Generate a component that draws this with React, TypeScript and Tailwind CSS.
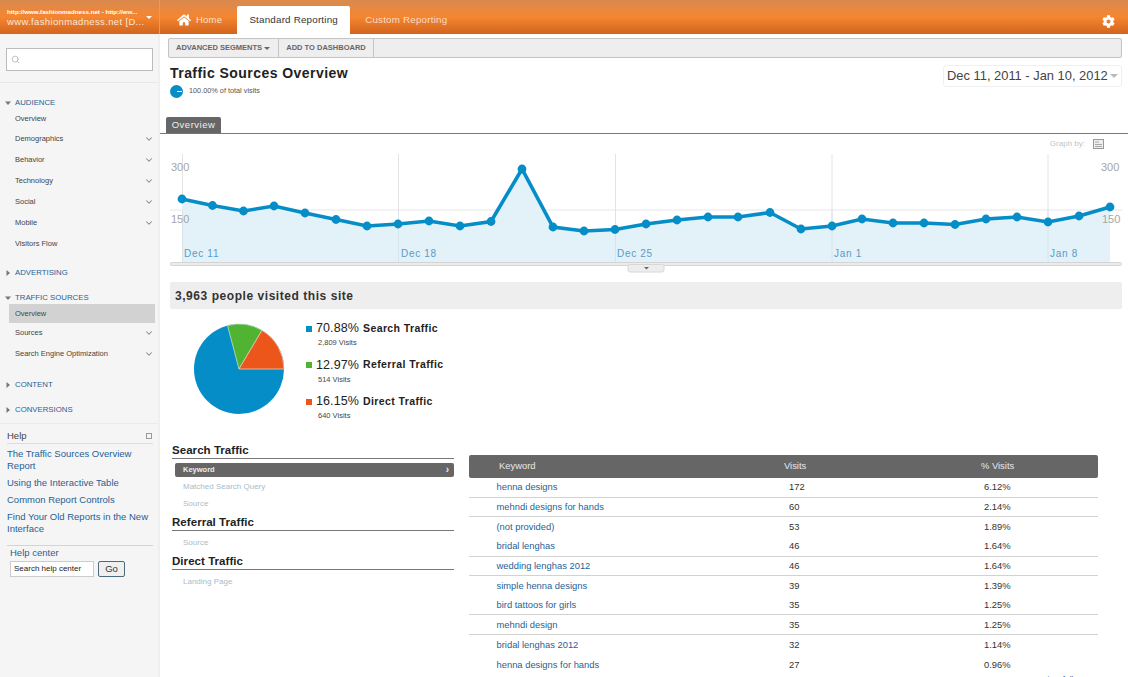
import { ChevronDown, Search } from 'lucide-react';
import { FaCog, FaHome } from 'react-icons/fa';

const audience = ['Overview', 'Demographics', 'Behavior', 'Technology', 'Social', 'Mobile', 'Visitors Flow'];

const rows = [
  { kw: 'henna designs', visits: 172, pct: '6.12%', line: true },
  { kw: 'mehndi designs for hands', visits: 60, pct: '2.14%', line: true },
  { kw: '(not provided)', visits: 53, pct: '1.89%', line: false },
  { kw: 'bridal lenghas', visits: 46, pct: '1.64%', line: true },
  { kw: 'wedding lenghas 2012', visits: 46, pct: '1.64%', line: true },
  { kw: 'simple henna designs', visits: 39, pct: '1.39%', line: false },
  { kw: 'bird tattoos for girls', visits: 35, pct: '1.25%', line: true },
  { kw: 'mehndi design', visits: 35, pct: '1.25%', line: true },
  { kw: 'bridal lenghas 2012', visits: 32, pct: '1.14%', line: false },
  { kw: 'henna designs for hands', visits: 27, pct: '0.96%', line: false },
];

// chart points in chart-local coords (chart starts at x=170, y=153)
const pts = [
  [12, 46], [42.5, 52.5], [73.5, 58], [104, 53], [135, 60], [166, 66.5], [197, 73], [228, 71], [259, 68], [290, 73],
  [321, 68.5], [352, 16], [383, 74], [414, 78], [445, 76.5], [476, 71], [507, 67], [538, 64], [568, 64], [600, 59.5],
  [631, 76], [662, 73], [692, 66], [723, 70], [754, 70], [785, 71.5], [816, 66], [847, 64], [878, 69], [909, 63], [940, 54],
];

function Caret({ open }: { open: boolean }) {
  return (
    <svg width="6" height="6" viewBox="0 0 6 6" className="shrink-0">
      {open ? <path d="M0 1.5h6L3 5z" fill="#777" /> : <path d="M1.5 0v6L5 3z" fill="#777" />}
    </svg>
  );
}

function SectionHead({ label, open, className }: { label: string; open: boolean; className: string }) {
  return (
    <div className={`flex items-center gap-[4px] pl-[5px] text-[7.8px] text-[#1f5f96] h-[12px] ${className}`}>
      <Caret open={open} />
      <span>{label}</span>
    </div>
  );
}

function NavRow({ label, more, active, height }: { label: string; more?: boolean; active?: boolean; height: string }) {
  return (
    <div className={`flex items-center justify-between ml-[9px] mr-[3px] pl-[6px] pr-[1px] text-[7.5px] text-[#444] ${height} ${active ? 'bg-[#d2d2d2]' : ''}`}>
      <span>{label}</span>
      {more && <ChevronDown size={10} strokeWidth={2.5} className="text-[#888]" />}
    </div>
  );
}

function TrafficChart() {
  const line = pts.map((p) => p.join(',')).join(' ');
  const area = `12,109 ${line} 940,109`;
  return (
    <svg width="952" height="122" viewBox="0 0 952 122" className="block">
      <path d="M0 57H952" stroke="#e6e6e6" />
      {[12.5, 228.5, 445.5, 662, 878].map((x) => (
        <path key={x} d={`M${x} 1V109`} stroke="#e4e4e4" />
      ))}
      <polygon points={area} fill="#e3f1f9" />
      {[12.5, 228.5, 445.5, 662, 878].map((x) => (
        <path key={x} d={`M${x} 57V109`} stroke="#d8e4ea" />
      ))}
      <polyline points={line} fill="none" stroke="#058dc7" strokeWidth="3.6" />
      {pts.map(([x, y]) => (
        <circle key={x} cx={x} cy={y} r="4.4" fill="#058dc7" />
      ))}
      <g fill="#a6a6a6" fontSize="11" fontFamily="Liberation Sans, sans-serif">
        <text x="1" y="18">300</text>
        <text x="1" y="70">150</text>
        <text x="931" y="18">300</text>
        <text x="932" y="70">150</text>
      </g>
      <g fill="#5a9cc5" fontSize="10" letterSpacing="0.7" fontFamily="Liberation Sans, sans-serif">
        <text x="14" y="104">Dec 11</text>
        <text x="231" y="104">Dec 18</text>
        <text x="447" y="104">Dec 25</text>
        <text x="664" y="104">Jan 1</text>
        <text x="880" y="104">Jan 8</text>
      </g>
      <rect x="0.5" y="109.5" width="951" height="3" rx="1" fill="#ececec" stroke="#d4d4d4" />
      <path d="M459.5 111.5h33a1.5 1.5 0 0 1 1.5 1.5v4a2 2 0 0 1-2 2h-32a2 2 0 0 1-2-2v-4a1.5 1.5 0 0 1 1.5-1.5z" fill="#ededed" stroke="#d8d8d8" />
      <path d="M474 114h5l-2.5 2.500z" fill="#666" />
    </svg>
  );
}

function PieChart() {
  return (
    <svg width="92" height="92" viewBox="0 0 92 92" className="block">
      <circle cx="46" cy="46" r="45" fill="#058dc7" />
      <path d="M46 46L34.500 2.500A45 45 0 0 1 69 7.400Z" fill="#50b432" stroke="#c9dcc0" strokeWidth="0.8" />
      <path d="M46 46L69 7.400A45 45 0 0 1 91 46Z" fill="#ed561b" stroke="#e8c9b5" strokeWidth="0.8" />
    </svg>
  );
}

function Legend({ color, pct, label, visits }: { color: string; pct: string; label: string; visits: string }) {
  return (
    <div className="h-[36.5px]">
      <div className="flex items-center h-[17px]">
        <span className={`w-[6px] h-[6px] mr-[4px] ${color}`} />
        <span className="text-[12.5px] tracking-[0.1px] text-[#222] mr-[4px]">{pct}</span>
        <span className="text-[10.5px] font-bold tracking-[0.4px] text-[#222]">{label}</span>
      </div>
      <div className="pl-[12px] text-[7.5px] text-[#444] leading-[11px]">{visits}</div>
    </div>
  );
}

function GroupTitle({ label, className }: { label: string; className: string }) {
  return (
    <div className={`text-[11.5px] font-bold tracking-[0.05px] text-[#222] leading-[14px] pb-[1px] border-b border-[#777] ${className}`}>{label}</div>
  );
}

export default function App() {
  return (
    <div className="w-[1128px] h-[677px] overflow-hidden bg-white flex flex-col font-['Liberation_Sans',Arial,sans-serif]">
      {/* top bar */}
      <header className="h-[34px] shrink-0 flex bg-gradient-to-b from-[#d98a4e] via-[#f58530] to-[#d2651e]">
        <div className="w-[160px] pl-[7px] pr-[8px] pt-[8px] border-r border-[#e79a62] relative">
          <div className="text-[6.2px] font-bold leading-[8px] text-white whitespace-nowrap">http://www.fashionmadness.net - http://ww...</div>
          <div className="text-[9.5px] tracking-[0.35px] leading-[12px] text-[#fbe6d5] whitespace-nowrap">www.fashionmadness.net [D...</div>
          <span className="absolute right-[7px] top-[16px] w-0 h-0 border-x-[3px] border-x-transparent border-t-[3px] border-t-white" />
        </div>
        <div className="flex items-end pl-[17px]">
          <div className="flex items-center h-[28px] text-white">
            <FaHome size={14} className="mr-[5px]" />
            <span className="text-[9.5px] tracking-[0.2px] text-[#fde3cd]">Home</span>
          </div>
          <div className="ml-[15px] w-[113px] h-[28px] bg-white rounded-t-[2px] flex items-center justify-center text-[9.8px] tracking-[0.2px] text-[#333]">Standard Reporting</div>
          <div className="ml-[15px] h-[28px] flex items-center text-[9.8px] tracking-[0.2px] text-[#fbdcc2]">Custom Reporting</div>
        </div>
        <div className="ml-auto pr-[13px] pt-[8px] flex items-center">
          <FaCog size={13} className="text-white" />
        </div>
      </header>

      <div className="flex flex-1 min-h-0">
        {/* sidebar */}
        <aside className="w-[160px] shrink-0 bg-[#f5f5f5] border-r-[2px] border-[#efefef]">
          <div className="h-[49px] border-b border-[#e8e8e8] pt-[14px] pl-[6px] pr-[5px]">
            <div className="h-[23px] bg-white border border-[#bcbcbc] flex items-center pl-[4px]">
              <Search size={9} strokeWidth={2.5} className="text-[#bbb]" />
            </div>
          </div>
          <SectionHead label="AUDIENCE" open className="mt-[14px]" />
          <div>
            {audience.map((item, i) => (
              <NavRow key={item} label={item} more={i > 0 && i < 6} height={i === 0 ? 'h-[19px]' : 'h-[21px]'} />
            ))}
          </div>
          <SectionHead label="ADVERTISING" open={false} className="mt-[13px]" />
          <SectionHead label="TRAFFIC SOURCES" open className="mt-[13px]" />
          <div>
            <NavRow label="Overview" active height="h-[19px]" />
            <NavRow label="Sources" more height="h-[20px]" />
            <NavRow label="Search Engine Optimization" more height="h-[21px]" />
          </div>
          <SectionHead label="CONTENT" open={false} className="mt-[15px]" />
          <SectionHead label="CONVERSIONS" open={false} className="mt-[13px]" />
          <div className="mt-[7px] border-t border-[#ebebeb] pt-[6px] pl-[7px] pr-[5px]">
            <div className="flex items-center justify-between h-[12px] border-b border-[#dcdcdc] pb-[1px] box-content text-[9.5px] text-[#444]">
              <span>Help</span>
              <span className="w-[6px] h-[6px] border border-[#999] mr-[1px]" />
            </div>
            <div className="text-[9.5px] leading-[12px] text-[#1f5f96] mt-[4px]">
              <p>The Traffic Sources Overview Report</p>
              <p className="mt-[5px]">Using the Interactive Table</p>
              <p className="mt-[5px]">Common Report Controls</p>
              <p className="mt-[5px]">Find Your Old Reports in the New Interface</p>
            </div>
            <div className="mt-[10px] border-t border-[#d4d4d4] pl-[3px]">
              <div className="text-[9.5px] text-[#1f5f96] leading-[14px]">Help center</div>
              <div className="flex items-center gap-[4px] mt-[1px]">
                <div className="w-[84px] h-[16px] bg-white border border-[#ccc] pl-[3px] text-[8px] leading-[14px] text-[#222] whitespace-nowrap">Search help center</div>
                <div className="w-[27px] h-[16px] rounded-[2px] border border-[#4d6a7c] bg-[#efefef] text-center text-[9.5px] leading-[14px] text-[#333]">Go</div>
              </div>
            </div>
          </div>
        </aside>

        {/* main */}
        <main className="flex-1 min-w-0 relative">
          <div className="ml-[8px] mr-[6px] mt-[4px] h-[20px] bg-[#eeeeee] border border-[#c4c4c4] rounded-[2px] flex text-[7.5px] font-bold text-[#666] whitespace-nowrap">
            <div className="w-[110px] border-r border-[#c4c4c4] flex items-center pl-[7px]">ADVANCED SEGMENTS<span className="ml-[2px] w-0 h-0 border-x-[3px] border-x-transparent border-t-[3px] border-t-[#666]" /></div>
            <div className="w-[95px] border-r border-[#c4c4c4] flex items-center justify-center">ADD TO DASHBOARD</div>
          </div>

          <div className="flex items-start justify-between pl-[10px] pr-[6px]">
            <div>
              <h1 className="mt-[6px] text-[14px] font-bold tracking-[0.45px] leading-[18px] text-[#222]">Traffic Sources Overview</h1>
              <div className="mt-[3px] flex items-center gap-[6px]">
                <span className="w-[13px] h-[13px] rounded-full bg-[#058dc7] flex items-center justify-center"><span className="w-[5px] h-px bg-white ml-[5px]" /></span>
                <span className="text-[7.3px] text-[#555]">100.00% of total visits</span>
              </div>
            </div>
            <div className="mt-[7px] h-[22px] w-[179px] border border-[#f0f0f0] rounded-[3px] flex items-center justify-between pl-[3px] pr-[3px] text-[12.9px] text-[#444] whitespace-nowrap">
              <span>Dec 11, 2011 - Jan 10, 2012</span>
              <span className="w-0 h-0 border-x-[4px] border-x-transparent border-t-[4px] border-t-[#bbb]" />
            </div>
          </div>

          <div className="mt-[19px] pl-[6px] border-b border-[#777] h-[17px]">
            <div className="w-[55px] h-[16px] bg-[#666] rounded-t-[2px] text-center text-[9.5px] tracking-[0.5px] leading-[16px] text-[#eee]">Overview</div>
          </div>

          <div className="flex items-center justify-end h-[19px] pr-[24px] gap-[8px] text-[8px] text-[#c4c4c4]">
            <span>Graph by:</span>
            <svg width="11" height="10" viewBox="0 0 11 10">
              <rect x="0.500" y="0.500" width="10" height="9" fill="#eee" stroke="#999" />
              <path d="M2 3h4M2 5.500h7M2 7.500h7" stroke="#aaa" />
            </svg>
          </div>

          <div className="pl-[10px]">
            <TrafficChart />
          </div>

          <div className="ml-[10px] mr-[6px] mt-[7px] h-[27px] bg-[#eeeeee] rounded-[2px] pl-[5px] flex items-center text-[12px] font-bold tracking-[0.55px] text-[#333]">3,963 people visited this site</div>

          <div className="flex pl-[33px] mt-[9px] h-[115px]">
            <div className="pt-[5px]"><PieChart /></div>
            <div className="ml-[21px] mt-[2px]">
              <Legend color="bg-[#058dc7]" pct="70.88%" label="Search Traffic" visits="2,809 Visits" />
              <Legend color="bg-[#50b432]" pct="12.97%" label="Referral Traffic" visits="514 Visits" />
              <Legend color="bg-[#ed561b]" pct="16.15%" label="Direct Traffic" visits="640 Visits" />
            </div>
          </div>

          <div className="flex pl-[12px] mt-[10px]">
            <div className="w-[282px] shrink-0">
              <GroupTitle label="Search Traffic" className="" />
              <div className="mt-[4px] ml-[3px] h-[14px] rounded-[2px] bg-[#666] flex items-center justify-between pl-[8px] pr-[5px] text-[7.5px] font-bold text-[#eee]">
                <span>Keyword</span>
                <span className="text-[10px] leading-none">›</span>
              </div>
              <div className="pl-[11px] pt-[1px] text-[8px] text-[#a9bccb]">
                <div className="h-[17px] leading-[17px]">Matched Search Query</div>
                <div className="h-[17px] leading-[17px]">Source</div>
              </div>
              <GroupTitle label="Referral Traffic" className="mt-[3px]" />
              <div className="pl-[11px] text-[8px] text-[#a9bccb] h-[23px] leading-[24px]">Source</div>
              <GroupTitle label="Direct Traffic" className="" />
              <div className="pl-[11px] text-[8px] text-[#a9bccb] h-[24px] leading-[24px]">Landing Page</div>
            </div>

            <div className="ml-[15px] w-[629px] shrink-0 mt-[12px] text-[9.4px]">
              <div className="h-[23px] bg-[#666] rounded-[2px] grid grid-cols-[315px_197px_1fr] items-center text-[#e8e8e8]">
                <span className="pl-[30px]">Keyword</span>
                <span>Visits</span>
                <span>% Visits</span>
              </div>
              {rows.map((r) => (
                <div key={r.kw} className={`h-[19.65px] grid grid-cols-[315px_197px_1fr] items-center ${r.line ? 'border-b border-[#d2d2d2]' : ''}`}>
                  <span className="pl-[27.5px] text-[#1f5f96]">{r.kw}</span>
                  <span className="pl-[5px] text-[#333]">{r.visits}</span>
                  <span className="pl-[3px] text-[#333]">{r.pct}</span>
                </div>
              ))}
              <div className="text-right text-[8.5px] text-[#1f5f96] leading-[12px]">view full report</div>
            </div>
          </div>
        </main>
      </div>
    </div>
  );
}
